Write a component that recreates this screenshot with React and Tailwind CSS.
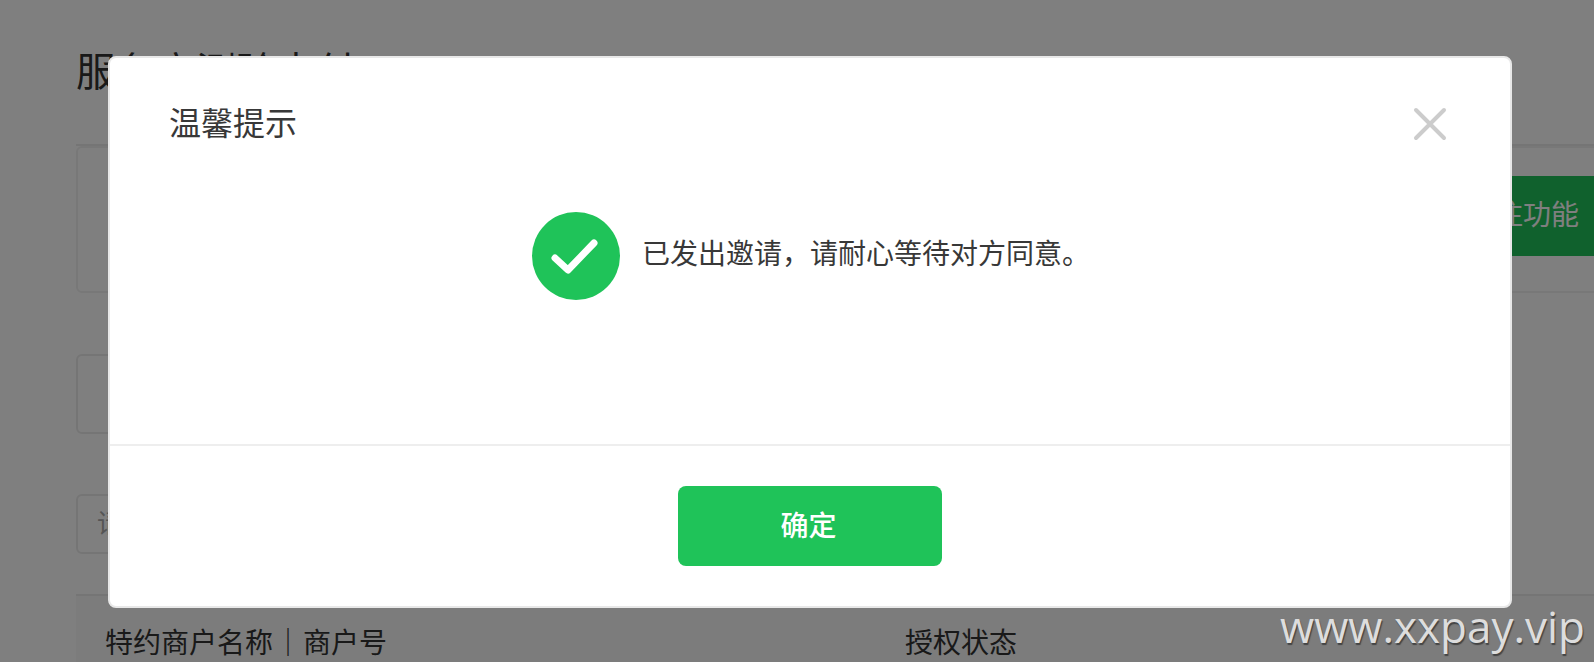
const App = () => {
  return (
    <div className="relative h-[662px] w-[1594px] overflow-hidden bg-white font-['Liberation_Sans','Noto_Sans_CJK_SC',sans-serif]">
      {/* Page behind the dialog */}
      <div className="pl-[76px]">
        <h1 className="pt-[44px] text-[40px] leading-[56px] text-[#333]">服务商测验支付</h1>
        <div className="mt-[44px] border-t-2 border-[#eaeaea]">
          <div className="-mr-[10px] flex h-[147px] items-start justify-end rounded-md border-2 border-[#f0f0f0] pt-[28px]">
            <div className="flex h-[80px] w-[200px] items-center justify-end bg-[#20c35a] pr-[23px] text-[28px] text-white">开通关注功能</div>
          </div>
        </div>
        <div className="mt-[61px] h-[80px] w-[400px] rounded-md border-2 border-[#eaeaea]"></div>
        <div className="mt-[60px] flex h-[60px] w-[400px] items-center rounded-md border-2 border-[#eaeaea] pl-[19px] text-[26px] text-[#aaa]">请输入</div>
        <div className="mt-[40px] flex h-[70px] border-t-2 border-[#eaeaea] bg-[#f8f8f8] pl-[29px] pt-[30px] text-[28px] leading-[36px] text-[#333]">
          <div className="w-[800px]">特约商户名称<span className="mx-[1px]">｜</span>商户号</div>
          <div>授权状态</div>
        </div>
      </div>

      {/* Mask */}
      <div className="absolute inset-0 bg-black/50"></div>

      {/* Dialog */}
      <div className="absolute left-[108px] top-[56px] flex h-[552px] w-[1404px] flex-col rounded-lg border-2 border-[#e8e8e8] bg-white">
        <div className="flex items-start justify-between pl-[59px] pr-[62px] pt-[46px]">
          <div className="text-[32px] leading-[40px] text-[#383838]">温馨提示</div>
          <svg className="mt-[2px]" width="36" height="36" viewBox="0 0 36 36" fill="none" stroke="#ccc" strokeWidth="4" strokeLinecap="round">
            <path d="M4 4L32 32M32 4L4 32" />
          </svg>
        </div>
        <div className="flex flex-1 items-start justify-center pl-[2px] pt-[68px]">
          <svg width="88" height="88" viewBox="0 0 88 88">
            <circle cx="44" cy="44" r="44" fill="#1fc359" />
            <path d="M23 46L36 58L62 31" fill="none" stroke="#fff" strokeWidth="7" strokeLinecap="round" strokeLinejoin="round" />
          </svg>
          <div className="ml-[22px] mt-[25px] text-[28px] leading-[36px] text-[#383838]">已发出邀请，请耐心等待对方同意。</div>
        </div>
        <div className="flex h-[162px] items-start justify-center border-t-2 border-[#eee] pt-[40px]">
          <button className="h-[80px] w-[264px] rounded-lg bg-[#1fc359] pr-[3px] pt-[2px] text-[28px] font-medium text-white">确定</button>
        </div>
      </div>

      {/* Watermark */}
      <div className="absolute right-[9px] top-[596px] font-['Open_Sans',sans-serif] text-[44px] leading-[60px] text-[#ddd] [text-shadow:1px_2px_1px_#444]">www.xxpay.vip</div>
    </div>
  );
};

export default App;
